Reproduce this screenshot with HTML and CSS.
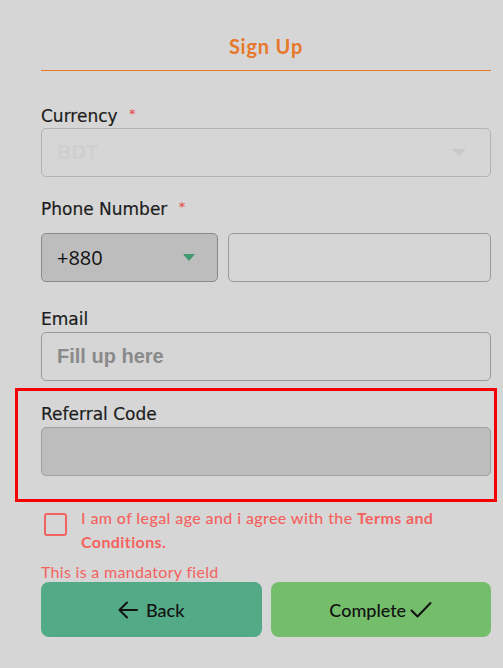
FILE: index.html
```html
<!DOCTYPE html>
<html>
<head>
<meta charset="utf-8">
<link rel="stylesheet" href="styles.css">
</head>
<body>
<div class="page">
  <h1 class="title">Sign Up</h1>
  <div class="rule"></div>

  <div class="field f-currency">
    <label class="label">Currency <span class="req">*</span></label>
    <div class="box select">
      <span class="value-faded">BDT</span>
      <span class="caret caret-faded"></span>
    </div>
  </div>

  <div class="field f-phone">
    <label class="label">Phone Number <span class="req">*</span></label>
    <div class="phone-row">
      <div class="box code">
        <span class="code-value">+880</span>
        <span class="caret caret-green"></span>
      </div>
      <div class="box phone"></div>
    </div>
  </div>

  <div class="field f-email">
    <label class="label">Email</label>
    <div class="box email"><span class="placeholder">Fill up here</span></div>
  </div>

  <div class="highlight">
    <label class="label">Referral Code</label>
    <div class="box referral"></div>
  </div>

  <div class="agree">
    <span class="checkbox"></span>
    <p class="agree-text">I am of legal age and i agree with the <b>Terms and</b><br><b>Conditions.</b></p>
  </div>

  <div class="error">This is a mandatory field</div>

  <div class="buttons">
    <button class="btn back">
      <svg width="20" height="18" viewBox="0 0 20 18" fill="none" stroke="#111" stroke-width="2" stroke-linecap="round" stroke-linejoin="round"><path d="M19 9H2M9 1.5L1.5 9 9 16.5"/></svg>
      <span>Back</span>
    </button>
    <button class="btn complete">
      <span>Complete</span>
      <svg width="22" height="18" viewBox="0 0 22 18" fill="none" stroke="#111" stroke-width="2" stroke-linecap="round" stroke-linejoin="round"><path d="M1.5 9.5L7.5 15.5 20.5 2"/></svg>
    </button>
  </div>
</div>
</body>
</html>
```
FILE: styles.css
```css
* { box-sizing: border-box; }
html, body { margin: 0; padding: 0; }
body {
  background: #d6d6d6;
  font-family: "DejaVu Sans", sans-serif;
  color: #1c1c1c;
  width: 503px;
  height: 668px;
  overflow: hidden;
}
.page {
  padding: 0 12px 0 41px;
}
.title {
  margin: 0;
  padding-top: 34px;
  height: 70px;
  text-align: center;
  font-family: "Lato", sans-serif;
  font-weight: 700;
  font-size: 20px;
  line-height: 24px;
  letter-spacing: 0.8px;
  color: #e8782a;
}
.rule {
  height: 1px;
  background: #ea7a26;
}
.label {
  display: block;
  font-size: 17px;
  font-weight: 500;
  line-height: 20px;
  color: #1c1c1c;
  -webkit-text-stroke: 0.2px #1c1c1c;
}
.req {
  color: #e8433f;
  font-size: 13px;
  margin-left: 6px;
  vertical-align: top;
  line-height: 16px;
  -webkit-text-stroke: 0;
}
.f-currency { margin-top: 35px; }
.f-currency .label { margin-bottom: 2px; }
.f-phone { margin-top: 22px; }
.f-phone .label { margin-bottom: 14px; }
.f-email { margin-top: 27px; }
.f-email .label { margin-bottom: 3px; }
.box {
  height: 49px;
  border: 1px solid #9b9b9b;
  border-radius: 5px;
  display: flex;
  align-items: center;
  padding: 0 15px;
}
.select { justify-content: space-between; border-color: #b3b3b3; }
.value-faded {
  font-family: "Liberation Sans", sans-serif;
  font-weight: 700;
  font-size: 20px;
  color: #cecece;
}
.caret {
  width: 0; height: 0;
  border-left: 7px solid transparent;
  border-right: 7px solid transparent;
  border-top: 7px solid #c8c8c8;
  margin-right: 9px;
}
.caret-green {
  border-left-width: 6.5px;
  border-right-width: 6.5px;
  border-top: 7px solid #3f9a6e;
  margin-right: 7px;
}
.phone-row { display: flex; gap: 10px; }
.code {
  width: 177px;
  flex: none;
  background: #bdbdbd;
  justify-content: space-between;
  border-color: #8a8a8a;
}
.code-value {
  font-family: "Open Sans", sans-serif;
  font-size: 20px;
  font-weight: 500;
  color: #111;
}
.phone { flex: 1; }
.placeholder {
  font-family: "Liberation Sans", sans-serif;
  font-weight: 700;
  font-size: 20px;
  color: #8a8a8a;
}
.highlight {
  margin: 7px -6px 0 -26px;
  border: 3px solid #f60000;
  padding: 13px 3px 23px 23px;
}
.highlight .label { margin-bottom: 3px; }
.referral { background: #bdbdbd; border-color: #a0a0a0; }
.agree {
  display: flex;
  align-items: flex-start;
  gap: 14px;
  margin-top: 4px;
  margin-left: 3px;
}
.checkbox {
  width: 23px; height: 23px;
  border: 2px solid #f06464;
  border-radius: 3px;
  flex: none;
  margin-top: 7px;
}
.agree-text {
  margin: 0;
  font-family: "Lato", sans-serif;
  font-size: 16px;
  font-weight: 500;
  line-height: 24px;
  letter-spacing: 0.4px;
  color: #f4625e;
  width: 390px;
}
.agree-text b { font-weight: 700; }
.error {
  margin-top: 10px;
  font-family: "Lato", sans-serif;
  font-size: 16px;
  line-height: 16px;
  letter-spacing: 0.3px;
  color: #f4625e;
}
.buttons {
  display: flex;
  gap: 9px;
  margin-top: 2px;
}
.btn {
  flex: 1;
  height: 55px;
  border: none;
  border-radius: 8px;
  display: flex;
  align-items: center;
  justify-content: center;
  gap: 8px;
  font-family: "Lato", sans-serif;
  font-size: 18px;
  font-weight: 500;
  color: #111;
}
.back { background: #53aa86; }
.complete { background: #74bd6a; gap: 4px; }
```
